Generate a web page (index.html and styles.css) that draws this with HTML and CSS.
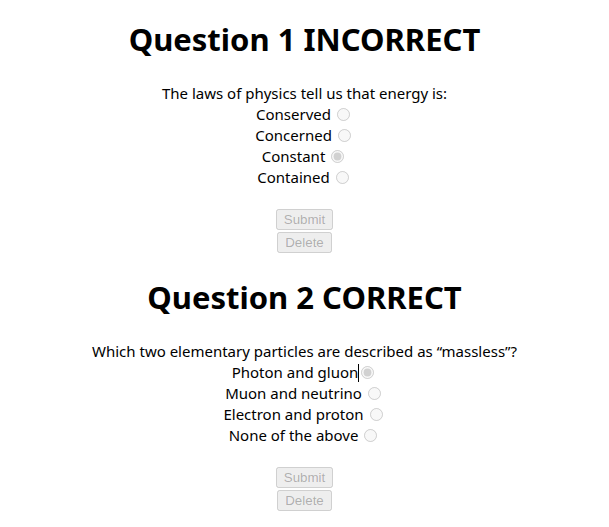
FILE: index.html
```html
<!DOCTYPE html>
<html>
<head>
<meta charset="utf-8">
<link rel="stylesheet" href="styles.css">
</head>
<body>
<div class="quiz">
  <h1 class="title first">Question 1 INCORRECT</h1>
  <form class="question">
    <div class="prompt">The laws of physics tell us that energy is:</div>
    <div class="option"><label>Conserved</label> <input type="radio" name="q1" disabled></div>
    <div class="option"><label>Concerned</label> <input type="radio" name="q1" disabled></div>
    <div class="option"><label>Constant</label> <input type="radio" name="q1" checked disabled></div>
    <div class="option"><label>Contained</label> <input type="radio" name="q1" disabled></div>
    <div class="actions">
      <button type="button" class="btn" disabled>Submit</button>
      <button type="button" class="btn" disabled>Delete</button>
    </div>
  </form>

  <h1 class="title">Question 2 CORRECT</h1>
  <form class="question">
    <div class="prompt">Which two elementary particles are described as “massless”?</div>
    <div class="option"><label>Photon and gluon<span class="caret"></span></label><input type="radio" name="q2" checked disabled></div>
    <div class="option"><label>Muon and neutrino</label> <input type="radio" name="q2" disabled></div>
    <div class="option"><label>Electron and proton</label> <input type="radio" name="q2" disabled></div>
    <div class="option"><label>None of the above</label> <input type="radio" name="q2" disabled></div>
    <div class="actions">
      <button type="button" class="btn" disabled>Submit</button>
      <button type="button" class="btn" disabled>Delete</button>
    </div>
  </form>
</div>
</body>
</html>
```
FILE: styles.css
```css
body {
  margin: 8px;
  font-family: "Noto Sans", "Open Sans", sans-serif;
  font-size: 15px;
  color: #000;
  background: #fff;
}
.quiz {
  text-align: center;
}
.title {
  font-size: 31px;
  font-weight: 700;
  line-height: 42px;
  margin: 23px 0 23px;
}
.title.first {
  margin-top: 10px;
}
.question {
  display: flex;
  flex-direction: column;
  align-items: center;
}
.prompt, .option {
  line-height: 21px;
  height: 21px;
}
.option input {
  margin: 0 3px 0 2px;
  width: 13px;
  height: 13px;
  vertical-align: -1px;
}
.caret {
  display: inline-block;
  width: 1px;
  height: 18px;
  background: #000;
  vertical-align: -4px;
}
.actions {
  margin-top: 21px;
  display: flex;
  flex-direction: column;
  align-items: center;
  gap: 2px;
}
.btn {
  font-family: "Liberation Sans", Arial, sans-serif;
  font-size: 13.33px;
  line-height: 15px;
  padding: 1px 6px;
  height: 21px;
}
```
